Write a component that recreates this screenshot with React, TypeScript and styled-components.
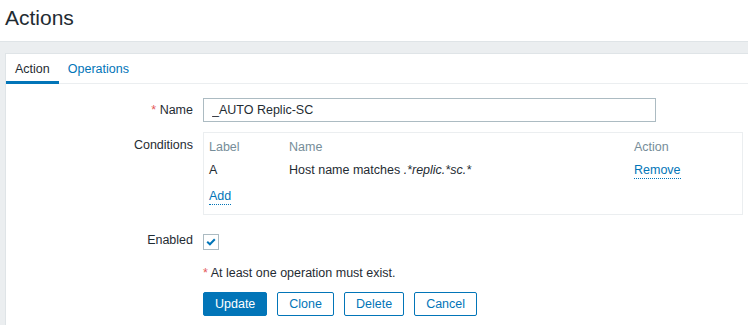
import React from 'react';
import styled, { createGlobalStyle } from 'styled-components';

const GlobalStyle = createGlobalStyle`
  html, body {
    margin: 0;
    padding: 0;
    background: #ffffff;
    overflow: hidden;
  }
  body {
    font-family: Arial, "Liberation Sans", sans-serif;
    font-size: 12.5px;
    color: #1f2c33;
  }
`;

type Condition = {
  label: string;
  prefix: string;
  value: string;
};

const conditions: Condition[] = [
  { label: 'A', prefix: 'Host name matches ', value: '.*replic.*sc.*' },
];

const App = () => {
  return (
    <PageStyled>
      <GlobalStyle />
      <HeaderStyled>
        <TitleStyled>Actions</TitleStyled>
      </HeaderStyled>
      <ContentStyled>
        <PanelStyled>
          <TabBarStyled>
            <TabStyled $active>Action</TabStyled>
            <TabStyled>Operations</TabStyled>
          </TabBarStyled>
          <FormStyled>
            <LabelStyled>
              <RequiredStyled>*</RequiredStyled> Name
            </LabelStyled>
            <FieldStyled>
              <InputStyled defaultValue="_AUTO Replic-SC" />
            </FieldStyled>

            <LabelStyled $top>Conditions</LabelStyled>
            <FieldStyled>
              <ConditionsBoxStyled>
                <ConditionsTableStyled>
                  <thead>
                    <tr>
                      <HeadCellStyled $width={80}>Label</HeadCellStyled>
                      <HeadCellStyled>Name</HeadCellStyled>
                      <HeadCellStyled $width={103}>Action</HeadCellStyled>
                    </tr>
                  </thead>
                  <tbody>
                    {conditions.map((c) => (
                      <tr key={c.label}>
                        <CellStyled>{c.label}</CellStyled>
                        <CellStyled>
                          {c.prefix}
                          <em>{c.value}</em>
                        </CellStyled>
                        <CellStyled>
                          <LinkStyled>Remove</LinkStyled>
                        </CellStyled>
                      </tr>
                    ))}
                    <tr>
                      <CellStyled colSpan={3} $spaced>
                        <LinkStyled>Add</LinkStyled>
                      </CellStyled>
                    </tr>
                  </tbody>
                </ConditionsTableStyled>
              </ConditionsBoxStyled>
            </FieldStyled>

            <LabelStyled>Enabled</LabelStyled>
            <FieldStyled>
              <CheckboxStyled>
                <svg width="10" height="8" viewBox="0 0 10 8">
                  <path
                    d="M1.2 3.8 L3.9 6.3 L8.8 1.3"
                    fill="none"
                    stroke="#0275b8"
                    strokeWidth="2"
                  />
                </svg>
              </CheckboxStyled>
            </FieldStyled>

            <span />
            <NoteStyled>
              <RequiredStyled>*</RequiredStyled> At least one operation must
              exist.
            </NoteStyled>

            <span />
            <ButtonRowStyled>
              <ButtonStyled $primary>Update</ButtonStyled>
              <ButtonStyled>Clone</ButtonStyled>
              <ButtonStyled>Delete</ButtonStyled>
              <ButtonStyled>Cancel</ButtonStyled>
            </ButtonRowStyled>
          </FormStyled>
        </PanelStyled>
      </ContentStyled>
    </PageStyled>
  );
};

export default App;

const PageStyled = styled.div`
  width: 748px;
  height: 325px;
  overflow: hidden;
  display: flex;
  flex-direction: column;
`;

const HeaderStyled = styled.header`
  height: 42px;
  padding: 0 5px;
  display: flex;
  align-items: center;
  background: #ffffff;
  border-bottom: 1px solid #dfe4e7;
  box-sizing: border-box;
`;

const TitleStyled = styled.h1`
  margin: 0;
  font-size: 21px;
  font-weight: normal;
  color: #1f2c33;
  line-height: 1;
  padding-bottom: 6px;
`;

const ContentStyled = styled.main`
  flex: 1;
  background: #ebeef0;
  padding: 11px 0 0 5px;
`;

const PanelStyled = styled.section`
  background: #ffffff;
  border: 1px solid #dfe4e7;
  border-right: none;
  border-bottom: none;
  height: 100%;
  box-sizing: border-box;
`;

const TabBarStyled = styled.nav`
  display: flex;
  height: 30px;
  border-bottom: 1px solid #ebeef0;
  box-sizing: border-box;
`;

const TabStyled = styled.div<{ $active?: boolean }>`
  padding: 0 9px;
  display: flex;
  align-items: center;
  color: ${(p) => (p.$active ? '#1f2c33' : '#0275b8')};
  border-bottom: 3px solid ${(p) => (p.$active ? '#0275b8' : 'transparent')};
  margin-bottom: -1px;
  padding-top: 2px;
`;

const FormStyled = styled.div`
  display: grid;
  grid-template-columns: 187px 1fr;
  column-gap: 10px;
  row-gap: 10px;
  padding-top: 14px;
  align-items: center;
`;

const LabelStyled = styled.div<{ $top?: boolean }>`
  text-align: right;
  align-self: ${(p) => (p.$top ? 'start' : 'center')};
  padding-top: ${(p) => (p.$top ? '6px' : '0')};
`;

const RequiredStyled = styled.span`
  color: #e45959;
`;

const FieldStyled = styled.div`
  display: flex;
`;

const InputStyled = styled.input`
  width: 453px;
  height: 24px;
  box-sizing: border-box;
  border: 1px solid #acbbc2;
  padding: 0 8px;
  font-family: Arial, "Liberation Sans", sans-serif;
  font-size: 12.5px;
  color: #1f2c33;
  outline: none;
`;

const ConditionsBoxStyled = styled.div`
  width: 540px;
  height: 83px;
  box-sizing: border-box;
  border: 1px solid #ebeef0;
  padding: 4px 5px;
`;

const ConditionsTableStyled = styled.table`
  width: 100%;
  border-collapse: collapse;
`;

const HeadCellStyled = styled.th<{ $width?: number }>`
  text-align: left;
  font-weight: normal;
  color: #768d99;
  padding: 3px 0 4px;
  line-height: 15px;
  width: ${(p) => (p.$width ? `${p.$width}px` : 'auto')};
`;

const CellStyled = styled.td<{ $spaced?: boolean }>`
  padding: ${(p) => (p.$spaced ? '7px 0 4px' : '4px 0')};
  line-height: 15px;

  em {
    font-style: italic;
  }
`;

const LinkStyled = styled.span`
  color: #0275b8;
  border-bottom: 1px dotted #0275b8;
  padding-bottom: 1px;
`;

const CheckboxStyled = styled.span`
  width: 16px;
  height: 16px;
  box-sizing: border-box;
  border: 1px solid #acbbc2;
  display: inline-flex;
  align-items: center;
  justify-content: center;
  margin: 9px 0 5px;
`;

const NoteStyled = styled.div`
  line-height: 15px;
  padding-top: 1px;
`;

const ButtonRowStyled = styled.div`
  display: flex;
  gap: 10px;
  padding-top: 1px;
`;

const ButtonStyled = styled.button<{ $primary?: boolean }>`
  height: 24px;
  padding: 0 11px;
  font-family: Arial, "Liberation Sans", sans-serif;
  font-size: 12.5px;
  border: 1px solid #0275b8;
  border-radius: 2px;
  background: ${(p) => (p.$primary ? '#0275b8' : '#ffffff')};
  color: ${(p) => (p.$primary ? '#ffffff' : '#0275b8')};
  cursor: pointer;
`;
